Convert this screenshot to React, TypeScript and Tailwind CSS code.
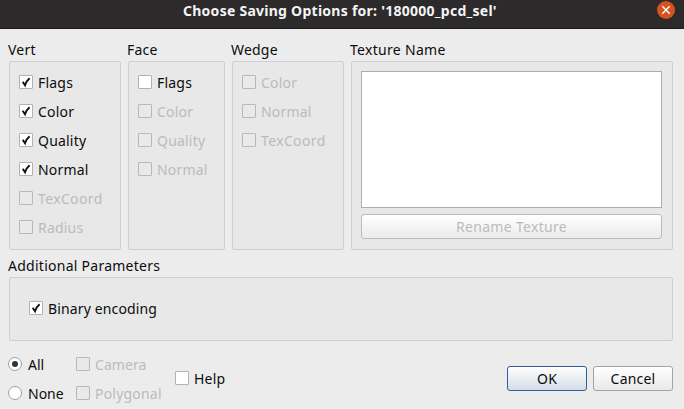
import React from "react";

type OptionProps = {
  label: string;
  checked?: boolean;
  disabled?: boolean;
  spacing?: string;
};

function Option({ label, checked, disabled, spacing = "tracking-[0.2px]" }: OptionProps) {
  return (
    <label className={`flex h-[14px] items-center gap-[5px] whitespace-nowrap ${disabled ? "text-[#bbbbbb]" : "text-[#0c0c0c]"}`}>
      <span className={`size-[14px] shrink-0 rounded-[1px] border ${disabled ? "border-[#b8b8b8] bg-[#e9e9e9]" : "border-[#b2b2b2] bg-white"}`}>
        {checked && (
          <svg viewBox="0 0 12 12" className="block size-3" fill="none" stroke="#111" strokeWidth="1.9">
            <path d="M2.7 5.8 L5 9.2 Q6.2 5 9.6 2.2" />
          </svg>
        )}
      </span>
      <span className={`pt-[2px] leading-[18px] ${spacing}`}>{label}</span>
    </label>
  );
}

function Radio({ label, checked, spacing = "" }: OptionProps) {
  return (
    <label className="flex h-[14px] items-center gap-[6px] whitespace-nowrap">
      <span className="flex size-[14px] shrink-0 items-center justify-center rounded-full border border-[#a0a0a0] bg-white">
        {checked && <span className="size-[6px] rounded-full bg-[#333]" />}
      </span>
      <span className={`pt-[2px] leading-[18px] ${spacing}`}>{label}</span>
    </label>
  );
}

type GroupProps = {
  title: string;
  width: string;
  children: React.ReactNode;
};

function Group({ title, width, children }: GroupProps) {
  return (
    <section className={`flex shrink-0 flex-col ${width}`}>
      <h2 className="-ml-px h-[21px] whitespace-nowrap leading-[20px] tracking-[0.2px]">{title}</h2>
      <div className="flex h-[189px] flex-col gap-[15px] rounded-[2px] border border-[#cfcfcf] bg-[#e8e8e8] px-[9px] pt-[13px]">
        {children}
      </div>
    </section>
  );
}

export default function App() {
  return (
    <main className="flex h-[409px] w-[684px] flex-col overflow-hidden bg-[#ececec] font-['Noto_Sans',sans-serif] text-[14px] text-[#0c0c0c]">
      <header className="grid h-[29px] shrink-0 grid-cols-[183px_1fr_27px] border-b border-[#1d1a1b] bg-[#2c2a2b]">
        <span />
        <h1 className="whitespace-nowrap text-[14px] font-bold leading-[21px] tracking-[0.26px] text-[#f4f4f4]">
          Choose Saving Options for: '180000_pcd_sel'
        </h1>
        <button className="mt-px size-[18px] rounded-full bg-[#d35420]" aria-label="Close">
          <svg viewBox="0 0 18 18" className="size-[18px]" stroke="#fff" strokeWidth="1.4">
            <path d="M5.3 5.3 L12.7 12.7 M12.7 5.3 L5.3 12.7" />
          </svg>
        </button>
      </header>

      <div className="flex shrink-0 gap-[7px] pl-[9px] pt-[11px]">
        <Group title="Vert" width="w-[112px]">
          <Option label="Flags" checked />
          <Option label="Color" checked />
          <Option label="Quality" checked />
          <Option label="Normal" checked />
          <Option label="TexCoord" disabled spacing="tracking-[0.36px]" />
          <Option label="Radius" disabled />
        </Group>
        <Group title="Face" width="w-[97px]">
          <Option label="Flags" />
          <Option label="Color" disabled />
          <Option label="Quality" disabled />
          <Option label="Normal" disabled />
        </Group>
        <Group title="Wedge" width="w-[112px]">
          <Option label="Color" disabled />
          <Option label="Normal" disabled />
          <Option label="TexCoord" disabled spacing="tracking-[0.36px]" />
        </Group>
        <section className="flex w-[322px] flex-col">
          <h2 className="-ml-px h-[21px] whitespace-nowrap leading-[20px] tracking-[0.3px]">Texture Name</h2>
          <div className="flex h-[189px] flex-col gap-[6px] rounded-[2px] border border-[#cfcfcf] bg-[#e8e8e8] pl-[9px] pr-[10px] pt-[9px]">
            <div className="h-[137px] border border-[#acacac] bg-white" />
            <button className="h-[25px] rounded-[3px] border border-[#bcbcbc] bg-linear-to-b from-white to-[#ebebeb] leading-[23px] tracking-[0.32px] text-[#bbbbbb]">
              Rename Texture
            </button>
          </div>
        </section>
      </div>

      <section className="shrink-0 pl-[9px] pr-[11px] pt-[6px]">
        <h2 className="-ml-px h-[21px] leading-[20px] tracking-[0.26px]">Additional Parameters</h2>
        <div className="h-[64px] rounded-[2px] border border-[#cfcfcf] bg-[#e8e8e8] pl-[19px] pt-[23px]">
          <Option label="Binary encoding" checked spacing="tracking-[0.14px]" />
        </div>
      </section>

      <footer className="flex pl-2 pr-[11px] pt-4">
        <div className="flex w-[68px] flex-col gap-[15px]">
          <Radio label="All" checked />
          <Radio label="None" />
        </div>
        <div className="flex w-[99px] flex-col gap-[15px]">
          <Option label="Camera" disabled spacing="tracking-[0.05px]" />
          <Option label="Polygonal" disabled />
        </div>
        <div className="pt-[14px]">
          <Option label="Help" />
        </div>
        <div className="ml-auto flex gap-[6px] pt-[9px]">
          <button className="h-[25px] w-20 rounded-[3px] border border-[#2f5f98] bg-linear-to-b from-white to-[#d5dde6] leading-[23px] tracking-[0.2px]">
            OK
          </button>
          <button className="h-[25px] w-20 rounded-[3px] border border-[#a2a2a2] bg-linear-to-b from-white to-[#e9e9e9] leading-[23px] tracking-[0.2px]">
            Cancel
          </button>
        </div>
      </footer>
    </main>
  );
}
